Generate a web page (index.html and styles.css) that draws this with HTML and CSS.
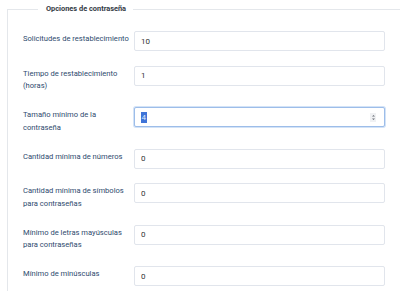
FILE: index.html
```html
<!DOCTYPE html>
<html lang="es">
<head>
<meta charset="utf-8">
<link rel="stylesheet" href="styles.css">
</head>
<body>
<fieldset class="group">
  <legend class="group-title">Opciones de contraseña</legend>
  <div class="rows">
    <div class="row">
      <label class="lbl">Solicitudes de restablecimiento</label>
      <input class="field" type="text" value="10">
    </div>
    <div class="row">
      <label class="lbl">Tiempo de restablecimiento (horas)</label>
      <input class="field" type="text" value="1">
    </div>
    <div class="row">
      <label class="lbl">Tamaño mínimo de la contraseña</label>
      <div class="field focused">
        <span class="sel">4</span>
        <span class="spin"><svg width="5" height="7" viewBox="0 0 5 7"><path d="M1 2.6 L2.5 1 L4 2.6 Z M1 4.4 L2.5 6 L4 4.4 Z" fill="#6a6f77"/></svg></span>
      </div>
    </div>
    <div class="row">
      <label class="lbl">Cantidad mínima de números</label>
      <input class="field" type="text" value="0">
    </div>
    <div class="row">
      <label class="lbl">Cantidad mínima de símbolos para contraseñas</label>
      <input class="field" type="text" value="0">
    </div>
    <div class="row">
      <label class="lbl">Mínimo de letras mayúsculas para contraseñas</label>
      <input class="field" type="text" value="0">
    </div>
    <div class="row">
      <label class="lbl">Mínimo de minúsculas</label>
      <input class="field" type="text" value="0">
    </div>
  </div>
</fieldset>
</body>
</html>
```
FILE: styles.css
```css
html, body {
  margin: 0;
  padding: 0;
  background: #fff;
  overflow: hidden;
  width: 400px;
  height: 291px;
}
body {
  font-family: Roboto, "Liberation Sans", sans-serif;
}
.group {
  margin: 3px 0 0 7px;
  padding: 16px 0 0 15px;
  border: 1px solid #e4e7eb;
  border-right: none;
  border-bottom: none;
  width: 393px;
  height: 288px;
  box-sizing: border-box;
  overflow: hidden;
}
.group-title {
  margin: 0 0 0 15px;
  padding: 0 7px 0 8px;
  font-size: 7.4px;
  line-height: 12px;
  font-weight: 700;
  color: #333a44;
}
.rows {
  display: flex;
  flex-direction: column;
  gap: 14.5px;
}
.row {
  display: flex;
  align-items: flex-start;
}
.lbl {
  width: 111px;
  flex: none;
  box-sizing: border-box;
  padding: 2px 2px 0 0;
  font-size: 7.6px;
  line-height: 12.5px;
  color: #2e4a6e;
}
.field {
  width: 251px;
  height: 20px;
  flex: none;
  box-sizing: border-box;
  margin: 0;
  border: 1px solid #e1e5ec;
  border-radius: 2px;
  padding: 0 6px;
  font-family: Roboto, "Liberation Sans", sans-serif;
  font-size: 8px;
  color: #333;
  background: #fff;
  outline: none;
}
.focused {
  display: flex;
  align-items: center;
  border-color: #9dbde9;
  box-shadow: 0 0 0 1px #d3e3f7;
}
.sel {
  background: #3f74d8;
  color: #dfe8fb;
  line-height: 11px;
  padding: 0 0.5px;
}
.spin {
  margin-left: auto;
  margin-right: 2px;
  width: 6px;
  height: 9px;
  background: #f0f1f3;
  display: flex;
  align-items: center;
  justify-content: center;
}
```
